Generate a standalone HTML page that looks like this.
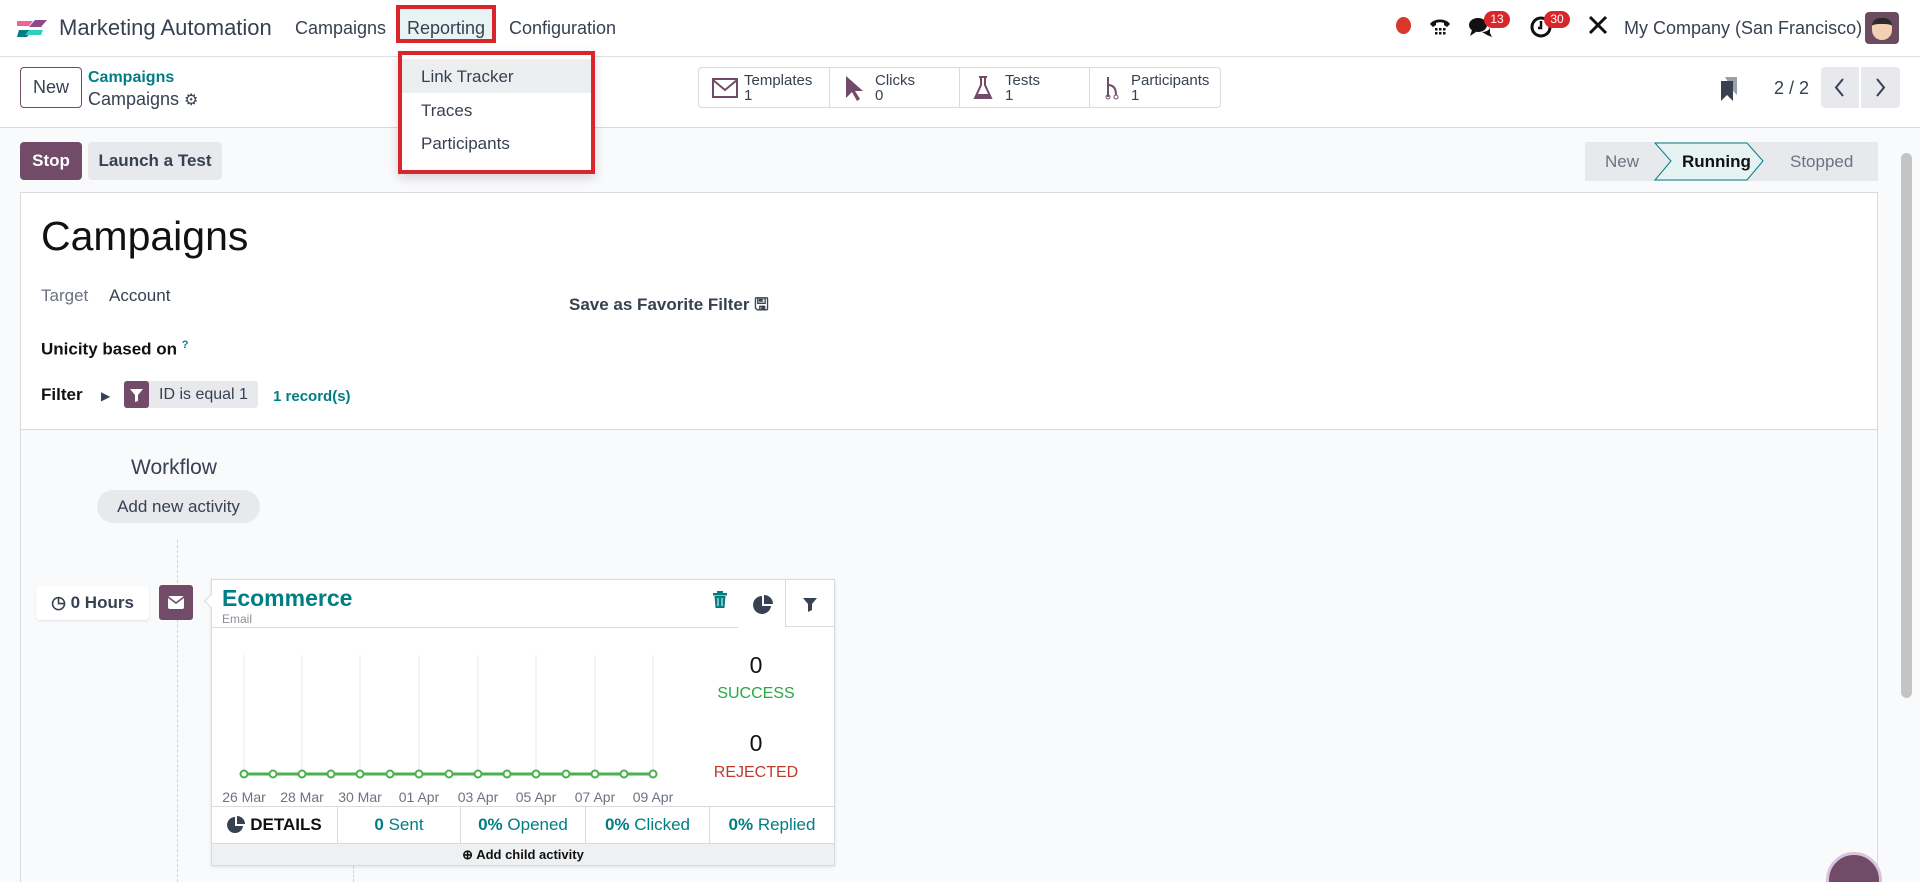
<!DOCTYPE html>
<html style="overflow:hidden;height:882px"><head><meta charset="utf-8"><style>
*{box-sizing:border-box;margin:0;padding:0}
body{width:1920px;height:882px;overflow:hidden;font-family:"Liberation Sans",sans-serif;color:#374151;background:#fff;position:relative;font-size:17px}
#w{position:relative;width:1920px;height:882px;overflow:hidden}
.a{position:absolute}
.teal{color:#017e84}
.btn{position:absolute;border-radius:4px;display:flex;align-items:center;justify-content:center;font-weight:bold}
</style></head><body><div id="w">
<!-- top nav -->
<div class="a" style="left:0;top:0;width:1920px;height:57px;background:#fff;border-bottom:1px solid #dee2e6"></div>
<svg class="a" style="left:15px;top:17px" width="34" height="22" viewBox="0 0 34 22"><path d="M2 4h16l-4 5H2z" fill="#f06292"/><path d="M20 3h12l-6 7H14z" fill="#8e4a8c"/><path d="M4 13h14l-6 7H2z" fill="#017e84"/><path d="M14 13h14l-2 5H10z" fill="#2ecfc0"/></svg>
<div class="a" style="left:59px;top:15px;font-size:22px;color:#374151">Marketing Automation</div>
<div class="a" style="left:295px;top:18px;font-size:18px">Campaigns</div>
<div class="a" style="left:396px;top:5px;width:100px;height:38px;border:4px solid #d9262c;background:#e8f4f4"></div>
<div class="a" style="left:407px;top:18px;font-size:18px">Reporting</div>
<div class="a" style="left:509px;top:18px;font-size:18px">Configuration</div>
<!-- systray -->
<div class="a" style="left:1396px;top:17px;width:15px;height:17px;border-radius:50%;background:#d9362c"></div>
<svg class="a" style="left:1428px;top:15px" width="24" height="24"><path d="M2 9c4-6 16-6 20 0l-3 3-3-2v-2c-3-1-5-1-8 0v2l-3 2z" fill="#111"/><g fill="#111"><rect x="7" y="13" width="2.5" height="2.5"/><rect x="11" y="13" width="2.5" height="2.5"/><rect x="15" y="13" width="2.5" height="2.5"/><rect x="7" y="17" width="2.5" height="2.5"/><rect x="11" y="17" width="2.5" height="2.5"/><rect x="15" y="17" width="2.5" height="2.5"/></g></svg>
<svg class="a" style="left:1468px;top:16px" width="24" height="22"><ellipse cx="10" cy="9" rx="9" ry="7" fill="#111"/><path d="M4 14l-2 6 6-4z" fill="#111"/><path d="M14 16c4 0 8-2 8-5v6l2 4-5-2z" fill="#111"/></svg>
<div class="a" style="left:1484px;top:11px;width:26px;height:17px;border-radius:9px;background:#d9262c;color:#fff;font-size:12px;text-align:center;line-height:17px">13</div>
<svg class="a" style="left:1529px;top:15px" width="24" height="24"><circle cx="12" cy="12" r="9" fill="none" stroke="#111" stroke-width="3"/><path d="M12 6v7h-3" fill="none" stroke="#111" stroke-width="2.5"/></svg>
<div class="a" style="left:1544px;top:11px;width:26px;height:17px;border-radius:9px;background:#d9262c;color:#fff;font-size:12px;text-align:center;line-height:17px">30</div>
<svg class="a" style="left:1587px;top:14px" width="22" height="22"><path d="M3 3l16 16M19 3L3 19" stroke="#111" stroke-width="3"/></svg>
<div class="a" style="left:1624px;top:18px;font-size:18px">My Company (San Francisco)</div>
<div class="a" style="left:1865px;top:12px;width:34px;height:32px;border-radius:4px;background:#6b4b5e"><div style="margin:6px 7px;width:20px;height:22px;border-radius:8px 8px 10px 10px;background:#f3d0b4;border-top:6px solid #2b2b2b"></div></div>
<!-- control row -->
<div class="btn" style="left:20px;top:67px;width:62px;height:41px;border:1px solid #714b67;font-weight:normal;font-size:18px">New</div>
<div class="a teal" style="left:88px;top:69px;font-size:16px;font-weight:bold">Campaigns</div>
<div class="a" style="left:88px;top:89px;font-size:18px">Campaigns <span style="font-size:16px">⚙</span></div>
<div class="a" style="left:698px;top:67px;width:523px;height:41px;border:1px solid #d8dadd;border-radius:4px;display:flex">
<div style="width:131px;border-right:1px solid #d8dadd;display:flex;align-items:center;padding-left:13px"><svg width="26" height="20"><rect x="1" y="1" width="24" height="18" fill="none" stroke="#714b67" stroke-width="2"/><path d="M1 2l12 10 12-10" fill="none" stroke="#714b67" stroke-width="2"/></svg><div style="margin-left:6px;font-size:15px;line-height:15px">Templates<br>1</div></div>
<div style="width:130px;border-right:1px solid #d8dadd;display:flex;align-items:center;padding-left:13px"><svg width="20" height="26"><path d="M3 1v22l6-6 5 9 3-2-5-8h8z" fill="#714b67"/></svg><div style="margin-left:12px;font-size:15px;line-height:15px">Clicks<br>0</div></div>
<div style="width:130px;border-right:1px solid #d8dadd;display:flex;align-items:center;padding-left:13px"><svg width="20" height="24"><path d="M6 1h8M8 1v8L2 22h16L12 9V1" fill="none" stroke="#714b67" stroke-width="2"/><path d="M4 18h12l2 4H2z" fill="#714b67"/></svg><div style="margin-left:12px;font-size:15px;line-height:15px">Tests<br>1</div></div>
<div style="flex:1;display:flex;align-items:center;padding-left:13px"><svg width="18" height="26"><path d="M5 2v20M5 10c5 0 8 3 8 10" fill="none" stroke="#714b67" stroke-width="2"/><circle cx="5" cy="22" r="2" fill="none" stroke="#714b67"/><circle cx="13" cy="22" r="2" fill="none" stroke="#714b67"/></svg><div style="margin-left:10px;font-size:15px;line-height:15px">Participants<br>1</div></div>
</div>
<svg class="a" style="left:1719px;top:76px" width="20" height="26"><path d="M6 1h12v18l-3-3z" fill="#9aa0a6"/><path d="M2 5h12v20l-6-6-6 6z" fill="#374151"/></svg>
<div class="a" style="left:1774px;top:78px;font-size:18px">2 / 2</div>
<div class="a" style="left:1821px;top:67px;width:38px;height:41px;background:#e7e9ed;border-radius:4px 0 0 4px"><svg width="38" height="41"><path d="M22 12l-7 8.5 7 8.5" fill="none" stroke="#374151" stroke-width="2"/></svg></div>
<div class="a" style="left:1861px;top:67px;width:39px;height:41px;background:#e7e9ed;border-radius:0 4px 4px 0"><svg width="39" height="41"><path d="M16 12l7 8.5-7 8.5" fill="none" stroke="#374151" stroke-width="2"/></svg></div>
<!-- content bg -->
<div class="a" style="left:0;top:127px;width:1920px;height:755px;background:#f9fafb;border-top:1px solid #d8dadd"></div>
<div class="btn" style="left:20px;top:142px;width:62px;height:38px;background:#714b67;color:#fff;font-size:17px">Stop</div>
<div class="btn" style="left:88px;top:142px;width:134px;height:38px;background:#e7e9ed;color:#374151;font-size:17px">Launch a Test</div>
<div class="a" style="left:1585px;top:142px;width:293px;height:39px;background:#e7e9ed"></div>
<svg class="a" style="left:1585px;top:142px" width="293" height="39"><path d="M70 1h92l16 18-16 19H70l16-19z" fill="#e6f3f3" stroke="#017e84"/></svg>
<div class="a" style="left:1605px;top:152px;font-size:17px;color:#6b7280">New</div>
<div class="a" style="left:1682px;top:152px;font-size:17px;font-weight:bold;color:#111">Running</div>
<div class="a" style="left:1790px;top:152px;font-size:17px;color:#6b7280">Stopped</div>
<div class="a" style="left:1901px;top:153px;width:11px;height:545px;background:#c4c4c4;border-radius:6px"></div>
<!-- form card -->
<div class="a" style="left:20px;top:192px;width:1858px;height:700px;background:#f9fafb;border:1px solid #d8dadd"></div>
<div class="a" style="left:21px;top:193px;width:1856px;height:237px;background:#fff;border-bottom:1px solid #d8dadd"></div>
<div class="a" style="left:41px;top:213px;font-size:41px;color:#111">Campaigns</div>
<div class="a" style="left:41px;top:286px;color:#6b7280">Target</div>
<div class="a" style="left:109px;top:286px">Account</div>
<div class="a" style="left:569px;top:292px;font-weight:bold">Save as Favorite Filter 🖫</div>
<div class="a" style="left:41px;top:339px;font-weight:bold;color:#111">Unicity based on <sup class="teal" style="font-size:11px">?</sup></div>
<div class="a" style="left:41px;top:385px;font-weight:bold;color:#111">Filter</div>
<div class="a" style="left:101px;top:389px;font-size:12px">▶</div>
<div class="a" style="left:124px;top:381px;width:134px;height:27px;background:#e7e9ed;border-radius:3px"></div>
<div class="a" style="left:124px;top:381px;width:25px;height:27px;background:#714b67;border-radius:3px"><svg width="25" height="27"><path d="M6 8h13l-5 6v6l-3 1v-7z" fill="#fff"/></svg></div>
<div class="a" style="left:159px;top:386px;font-size:16px">ID is equal 1</div>
<div class="a teal" style="left:273px;top:388px;font-size:15px;font-weight:bold">1 record(s)</div>
<div class="a" style="left:131px;top:456px;font-size:21px">Workflow</div>
<div class="btn" style="left:97px;top:490px;width:163px;height:33px;background:#e7e9ed;border-radius:17px;font-weight:normal;font-size:17px">Add new activity</div>
<div class="a" style="left:177px;top:540px;height:342px;border-left:1px dashed #cfd2d6"></div>
<div class="a" style="left:353px;top:866px;height:16px;border-left:1px dashed #cfd2d6"></div>
<div class="btn" style="left:36px;top:586px;width:113px;height:34px;background:#fff;box-shadow:0 1px 2px rgba(0,0,0,.1);font-size:17px">◷ 0 Hours</div>
<div class="a" style="left:159px;top:585px;width:34px;height:35px;background:#714b67;border-radius:3px"><svg width="34" height="35"><rect x="9" y="11" width="16" height="13" rx="2" fill="#fff"/><path d="M9 12l8 6 8-6" fill="none" stroke="#714b67" stroke-width="1.6"/></svg></div>
<!-- activity card -->
<div class="a" style="left:211px;top:579px;width:624px;height:287px;background:#fff;border:1px solid #d8dadd;box-shadow:0 1px 3px rgba(0,0,0,.1)"></div>
<div class="a" style="left:206px;top:596px;width:10px;height:10px;background:#fff;border-left:1px solid #d8dadd;border-bottom:1px solid #d8dadd;transform:rotate(45deg)"></div>
<div class="a" style="left:212px;top:627px;width:526px;border-top:1px solid #d8dadd"></div>
<div class="a" style="left:785px;top:580px;width:49px;height:47px;border-left:1px solid #d8dadd;border-bottom:1px solid #d8dadd"><svg width="49" height="47"><path d="M17 18h14l-5 6v6l-4 2v-8z" fill="#374151"/></svg></div>
<div class="a" style="left:752px;top:594px"><svg width="22" height="22"><path d="M10 2a9 9 0 1 0 9 10h-9z" fill="#374151"/><path d="M12 1v9h9a9 9 0 0 0-9-9z" fill="#374151"/></svg></div>
<div class="a teal" style="left:222px;top:585px;font-size:23px;font-weight:bold">Ecommerce</div>
<div class="a" style="left:222px;top:612px;font-size:12px;color:#8a8f96">Email</div>
<svg class="a" style="left:713px;top:591px" width="14" height="18"><rect x="0" y="2" width="14" height="2.5" fill="#017e84"/><rect x="4" y="0" width="6" height="3" fill="#017e84"/><path d="M1.5 5h11l-1 12h-9z" fill="#017e84"/><path d="M5 7v8M9 7v8" stroke="#fff" stroke-width="1"/></svg>
<svg class="a" style="left:212px;top:640px" width="500" height="166">
<g stroke="#e5e7eb"><line x1="32" y1="15" x2="32" y2="134"/><line x1="90" y1="15" x2="90" y2="134"/><line x1="148" y1="15" x2="148" y2="134"/><line x1="207" y1="15" x2="207" y2="134"/><line x1="266" y1="15" x2="266" y2="134"/><line x1="324" y1="15" x2="324" y2="134"/><line x1="383" y1="15" x2="383" y2="134"/><line x1="441" y1="15" x2="441" y2="134"/></g>
<line x1="32" y1="134" x2="441" y2="134" stroke="#4caf50" stroke-width="3"/>
<g fill="#fff" stroke="#4caf50" stroke-width="2"><circle cx="32" cy="134" r="3.5"/><circle cx="61" cy="134" r="3.5"/><circle cx="90" cy="134" r="3.5"/><circle cx="119" cy="134" r="3.5"/><circle cx="148" cy="134" r="3.5"/><circle cx="178" cy="134" r="3.5"/><circle cx="207" cy="134" r="3.5"/><circle cx="237" cy="134" r="3.5"/><circle cx="266" cy="134" r="3.5"/><circle cx="295" cy="134" r="3.5"/><circle cx="324" cy="134" r="3.5"/><circle cx="354" cy="134" r="3.5"/><circle cx="383" cy="134" r="3.5"/><circle cx="412" cy="134" r="3.5"/><circle cx="441" cy="134" r="3.5"/></g>
<g font-family="Liberation Sans" font-size="14" fill="#6b7280" text-anchor="middle"><text x="32" y="162">26 Mar</text><text x="90" y="162">28 Mar</text><text x="148" y="162">30 Mar</text><text x="207" y="162">01 Apr</text><text x="266" y="162">03 Apr</text><text x="324" y="162">05 Apr</text><text x="383" y="162">07 Apr</text><text x="441" y="162">09 Apr</text></g>
</svg>
<div class="a" style="left:720px;top:652px;width:72px;text-align:center;font-size:23px;color:#111">0</div>
<div class="a" style="left:700px;top:685px;width:112px;text-align:center;font-size:16px;color:#28a745">SUCCESS</div>
<div class="a" style="left:720px;top:730px;width:72px;text-align:center;font-size:23px;color:#111">0</div>
<div class="a" style="left:700px;top:764px;width:112px;text-align:center;font-size:16px;color:#c0392b">REJECTED</div>
<div class="a" style="left:212px;top:806px;width:622px;height:37px;border-top:1px solid #d8dadd;display:flex;font-size:17px">
<div style="width:126px;border-right:1px solid #d8dadd;display:flex;align-items:center;justify-content:center;font-weight:bold;color:#111"><svg width="18" height="18" style="margin-right:5px"><path d="M8 1a8 8 0 1 0 8 9H8z" fill="#374151"/><path d="M10 0v8h8a8 8 0 0 0-8-8z" fill="#374151"/></svg>DETAILS</div>
<div class="teal" style="width:123px;border-right:1px solid #d8dadd;display:flex;align-items:center;justify-content:center"><b>0</b>&nbsp;Sent</div>
<div class="teal" style="width:125px;border-right:1px solid #d8dadd;display:flex;align-items:center;justify-content:center"><b>0%</b>&nbsp;Opened</div>
<div class="teal" style="width:124px;border-right:1px solid #d8dadd;display:flex;align-items:center;justify-content:center"><b>0%</b>&nbsp;Clicked</div>
<div class="teal" style="flex:1;display:flex;align-items:center;justify-content:center"><b>0%</b>&nbsp;Replied</div>
</div>
<div class="a" style="left:212px;top:843px;width:622px;height:22px;background:#eef0f2;border-top:1px solid #d8dadd;text-align:center;font-size:13px;font-weight:bold;line-height:21px;color:#111">⊕ Add child activity</div>
<div class="a" style="left:1826px;top:852px;width:56px;height:56px;border-radius:50%;background:#714b67;border:3px solid #d9c4dc"></div>
<!-- dropdown on top -->
<div class="a" style="left:398px;top:51px;width:197px;height:123px;border:4px solid #d9262c;background:#fff;box-shadow:0 4px 10px rgba(0,0,0,.15)"></div>
<div class="a" style="left:402px;top:59px;width:189px;height:34px;background:#eceef0"></div>
<div class="a" style="left:421px;top:67px;font-size:17px">Link Tracker</div>
<div class="a" style="left:421px;top:101px;font-size:17px">Traces</div>
<div class="a" style="left:421px;top:134px;font-size:17px">Participants</div>
</div></body></html>
